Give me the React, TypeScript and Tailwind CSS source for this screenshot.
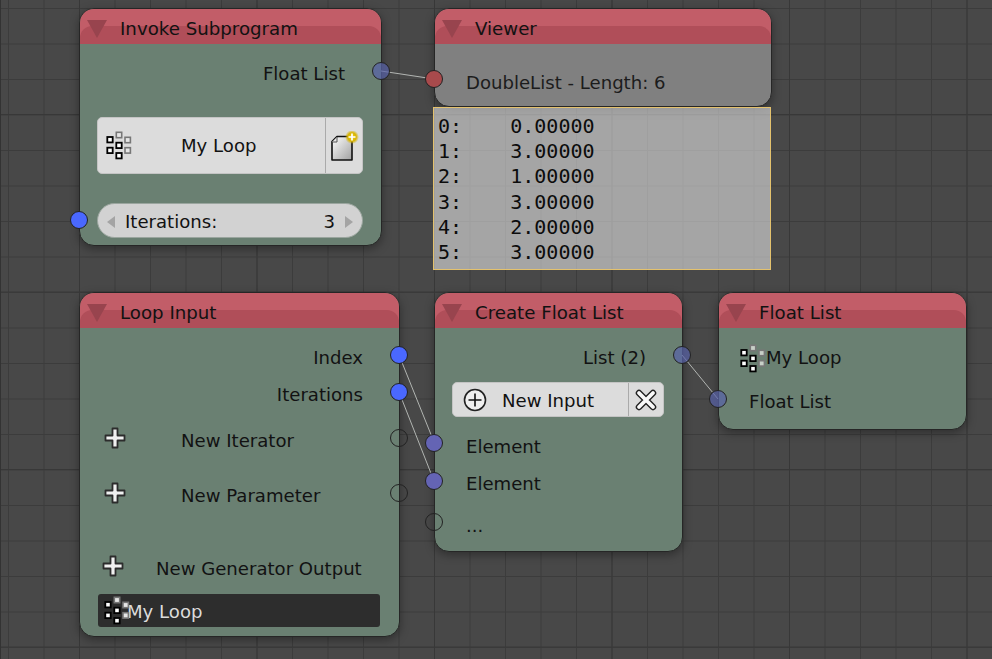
import React from "react";

const GridIcon: React.FC<{ className?: string; light?: boolean }> = ({ className, light }) => {
  const solid = [
    [1.3, 6],
    [1.3, 16.7],
    [10.3, 11.7],
    [10.3, 22],
  ];
  const faded = [
    [10.3, 1.3],
    [19, 6.3],
    [19, 16.7],
  ];
  return (
    <svg viewBox="0 0 26 29" className={className} width="26" height="29">
      {faded.map(([x, y]) => (
        <rect key={`${x}-${y}`} x={x} y={y} width="5.4" height="5.4" fill={light ? "#c8d0c8" : "#e6e6e6"} stroke="#777" strokeWidth="1.6" />
      ))}
      {solid.map(([x, y]) => (
        <rect key={`${x}-${y}`} x={x} y={y} width="5.4" height="5.4" fill="#fff" stroke="#000" strokeWidth="1.8" />
      ))}
    </svg>
  );
};

const PlusIcon: React.FC<{ className?: string }> = ({ className }) => (
  <svg viewBox="0 0 22 22" width="22" height="22" className={className}>
    <path
      d="M8.5 1.5h5v7h7v5h-7v7h-5v-7h-7v-5h7z"
      fill="#f0f0f0"
      stroke="#2c2c2c"
      strokeWidth="1.800"
      strokeLinejoin="round"
    />
  </svg>
);

const DocAddIcon: React.FC = () => (
  <svg viewBox="0 0 30 30" width="30" height="30">
    <defs>
      <linearGradient id="docFill" x1="0" y1="0" x2="1" y2="1">
        <stop offset="0" stopColor="#ffffff" />
        <stop offset="1" stopColor="#a0a0a0" />
      </linearGradient>
      <radialGradient id="docGlow">
        <stop offset="0" stopColor="#f0d020" />
        <stop offset="0.6" stopColor="#d8b400" />
        <stop offset="1" stopColor="#d8b400" stopOpacity="0" />
      </radialGradient>
    </defs>
    <path d="M8 5.5h15v23.5h-20v-18.500z" fill="url(#docFill)" stroke="#111" strokeWidth="1.600" strokeLinejoin="round" />
    <path d="M8 6v5h-5" fill="#e8e8e8" stroke="#555" strokeWidth="1" />
    <circle cx="23" cy="6" r="7" fill="url(#docGlow)" />
    <path d="M23 2.500v7M19.500 6h7" stroke="#fff" strokeWidth="1.700" />
  </svg>
);

const PlusCircleIcon: React.FC = () => (
  <svg viewBox="0 0 24 24" width="24" height="24">
    <circle cx="12" cy="12" r="10.500" fill="#f0f0f0" stroke="#222" strokeWidth="1.600" />
    <path d="M12 5.500v13M5.500 12h13" stroke="#111" strokeWidth="1.600" />
  </svg>
);

const CloseIcon: React.FC = () => (
  <svg viewBox="0 0 24 24" width="24" height="24">
    <path d="M5 5l14 14M19 5l-14 14" stroke="#222" strokeWidth="6.500" strokeLinecap="round" />
    <path d="M5 5l14 14M19 5l-14 14" stroke="#fafafa" strokeWidth="3.800" strokeLinecap="round" />
  </svg>
);

const Socket: React.FC<{ x: string; y: string; color: string }> = ({ x, y, color }) => (
  <div className={`absolute z-10 box-border h-[18px] w-[18px] rounded-full border border-[#222] ${x} ${y} ${color}`} />
);

const NodeCard: React.FC<{
  title: string;
  className: string;
  bodyClass?: string;
  children: React.ReactNode;
}> = ({ title, className, bodyClass = "bg-[#6a8072]", children }) => (
  <div
    className={`absolute box-border flex flex-col rounded-[15px] border border-[#262626] shadow-[0_3px_10px_rgba(0,0,0,0.35)] ${bodyClass} ${className}`}
  >
    <div className="relative h-[35px] shrink-0 overflow-hidden rounded-t-[14px] bg-[#c25d68]">
      <div className="absolute inset-x-0 bottom-0 h-[18px] rounded-t-[12px] bg-[#b04e59]" />
      <div className="relative flex h-full items-center pl-[7px]">
        <svg viewBox="0 0 20 18" width="20" height="18" className="mt-[4px]">
          <path d="M0 0h20l-10 18z" fill="#98444e" />
        </svg>
        <span className="ml-[13px] mt-[4px] text-[18.200px] text-[#121212]">{title}</span>
      </div>
    </div>
    {children}
  </div>
);

const values = ["0.00000", "3.00000", "1.00000", "3.00000", "2.00000", "3.00000"];

export default function App() {
  return (
    <div
      className="relative h-[659px] w-[992px] overflow-hidden bg-[#484848] bg-[linear-gradient(to_right,#383838_1px,transparent_1px),linear-gradient(to_bottom,#383838_1px,transparent_1px),linear-gradient(to_right,#3c3c3c_1px,transparent_1px),linear-gradient(to_bottom,#3c3c3c_1px,transparent_1px)] bg-[size:177.5px_177.5px,177.5px_177.5px,35.5px_35.5px,35.5px_35.5px] bg-[position:79px_0,0_114px,8px_0,0_8px] font-['DejaVu_Sans',sans-serif] text-[18.100px] text-[#121212] shadow-[inset_1px_0_0_#333]"
    >
      {/* Invoke Subprogram */}
      <NodeCard title="Invoke Subprogram" className="left-[79px] top-[8px] h-[238px] w-[303px]">
        <div className="mt-[12px] flex h-[36px] items-center justify-end pr-[36px]">Float List</div>
        <div className="ml-[17px] mr-[18px] mt-[25px] flex h-[57px] items-center rounded-[5px] border border-[#c4c4c4] bg-[#dcdcdc]">
          <GridIcon className="ml-[8px] shrink-0" />
          <span className="ml-[49px] flex-1">My Loop</span>
          <div className="flex h-full w-[37px] items-center justify-center border-l border-[#aaa]">
            <DocAddIcon />
          </div>
        </div>
        <div className="ml-[17px] mr-[18px] mt-[29px] flex h-[35px] items-center rounded-full border border-[#9aa59e] bg-[#d2d2d2] px-[9px] pt-[2px]">
          <svg viewBox="0 0 8 12" width="8" height="12" className="shrink-0">
            <path d="M8 0v12l-8-6z" fill="#a4a4a4" />
          </svg>
          <span className="ml-[10px] flex-1">Iterations:</span>
          <span className="mr-[10px]">3</span>
          <svg viewBox="0 0 8 12" width="8" height="12" className="shrink-0">
            <path d="M0 0v12l8-6z" fill="#a4a4a4" />
          </svg>
        </div>
      </NodeCard>

      {/* Viewer */}
      <NodeCard title="Viewer" bodyClass="bg-[#808080]" className="left-[434px] top-[8px] h-[99px] w-[338px]">
        <div className="mt-[21px] flex h-[36px] items-center pl-[31px] text-[#1c1c1c]">DoubleList - Length: 6</div>
      </NodeCard>
      <div className="absolute left-[433px] top-[107px] box-border h-[163px] w-[338px] border border-[#e4c26e] bg-[rgba(255,255,255,0.51)] pl-[4px] pt-[6px] font-['DejaVu_Mono',monospace] text-[20px] leading-[25.200px] text-[#0c0c0c]">
        {values.map((v, i) => (
          <div key={i} className="whitespace-pre">{`${i}:    ${v}`}</div>
        ))}
      </div>

      {/* Loop Input */}
      <NodeCard title="Loop Input" className="left-[79px] top-[292px] h-[345px] w-[321px]">
        <div className="mt-[12px] flex h-[36px] items-center justify-end pr-[36px]">Index</div>
        <div className="mt-[1px] flex h-[36px] items-center justify-end pr-[36px]">Iterations</div>
        <div className="mt-[10px] flex h-[36px] items-center pl-[24px]">
          <PlusIcon className="-mt-[6px]" />
          <span className="ml-[55px]">New Iterator</span>
        </div>
        <div className="mt-[19px] flex h-[36px] items-center pl-[24px]">
          <PlusIcon className="-mt-[6px]" />
          <span className="ml-[55px]">New Parameter</span>
        </div>
        <div className="mt-[37px] flex h-[36px] items-center pl-[22px]">
          <PlusIcon className="-mt-[6px]" />
          <span className="ml-[32px]">New Generator Output</span>
        </div>
        <div className="relative ml-[18px] mr-[19px] mt-[7px] flex h-[33px] items-center rounded-[3px] bg-[#2d2d2d] pl-[29px] pt-[3px] text-[#dcdcdc]">
          <GridIcon className="absolute left-[6px] top-[2px]" />
          <span>My Loop</span>
        </div>
      </NodeCard>

      {/* Create Float List */}
      <NodeCard title="Create Float List" className="left-[434px] top-[292px] h-[260px] w-[249px]">
        <div className="mt-[12px] flex h-[36px] items-center justify-end pr-[36px]">List (2)</div>
        <div className="ml-[17px] mr-[18px] mt-[6px] flex h-[35px] items-center rounded-[5px] border border-[#c4c4c4] bg-[#dcdcdc]">
          <div className="ml-[10px] shrink-0"><PlusCircleIcon /></div>
          <span className="ml-[15px] flex-1 pt-[2px]">New Input</span>
          <div className="flex h-full w-[35px] items-center justify-center border-l border-[#aaa]">
            <CloseIcon />
          </div>
        </div>
        <div className="mt-[12px] flex h-[36px] items-center pl-[31px]">Element</div>
        <div className="mt-[1px] flex h-[36px] items-center pl-[31px]">Element</div>
        <div className="mt-[6px] flex h-[36px] items-center pl-[31px]">...</div>
      </NodeCard>

      {/* Float List */}
      <NodeCard title="Float List" className="left-[718px] top-[292px] h-[138px] w-[249px]">
        <div className="mt-[12px] flex h-[36px] items-center pl-[21px]">
          <GridIcon className="shrink-0" light />
          <span>My Loop</span>
        </div>
        <div className="mt-[8px] flex h-[36px] items-center pl-[30px]">Float List</div>
      </NodeCard>

      {/* links */}
      <svg className="pointer-events-none absolute left-0 top-0 z-[5]" width="992" height="659">
        <g stroke="#c4c8c4" strokeWidth="1" fill="none" opacity="0.85">
          <path d="M381 71L434 79" />
          <path d="M399 355L434 442" />
          <path d="M399 392L434 481" />
          <path d="M682 355L718 399" />
        </g>
      </svg>

      <Socket x="left-[372px]" y="top-[62px]" color="bg-[rgba(88,98,170,0.7)]" />
      <Socket x="left-[425px]" y="top-[70px]" color="bg-[#a84a4c]" />
      <Socket x="left-[70px]" y="top-[211px]" color="bg-[#4a68ff]" />
      <Socket x="left-[390px]" y="top-[346px]" color="bg-[#4a68ff]" />
      <Socket x="left-[390px]" y="top-[383px]" color="bg-[#4a68ff]" />
      <Socket x="left-[390px]" y="top-[429px]" color="bg-transparent" />
      <Socket x="left-[390px]" y="top-[484px]" color="bg-transparent" />
      <Socket x="left-[425px]" y="top-[434px]" color="bg-[#6464b4]" />
      <Socket x="left-[425px]" y="top-[472px]" color="bg-[#6464b4]" />
      <Socket x="left-[425px]" y="top-[513px]" color="bg-transparent" />
      <Socket x="left-[673px]" y="top-[346px]" color="bg-[rgba(88,98,170,0.7)]" />
      <Socket x="left-[709px]" y="top-[390px]" color="bg-[rgba(88,98,170,0.7)]" />
    </div>
  );
}
